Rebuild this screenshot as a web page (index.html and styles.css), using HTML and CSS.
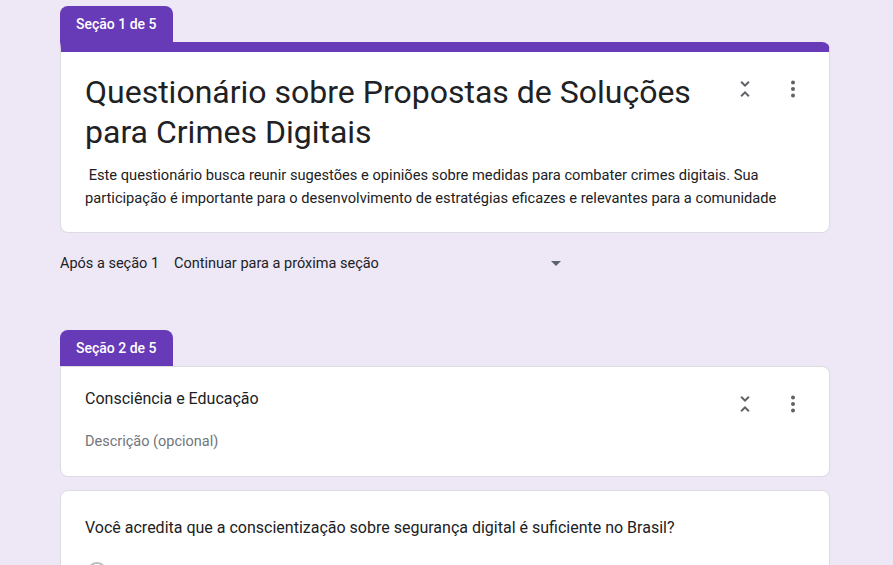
FILE: index.html
```html
<!DOCTYPE html>
<html lang="pt">
<head>
<meta charset="utf-8">
<link rel="stylesheet" href="styles.css">
</head>
<body>
<main class="form">
  <section class="section first">
    <div class="tab">Seção 1 de 5</div>
    <div class="card header-card">
      <div class="card-head">
        <h1 class="title">Questionário sobre Propostas de Soluções para Crimes Digitais</h1>
        <div class="actions">
          <svg class="icon" viewBox="0 0 24 24"><path d="M7.41 18.59L8.83 20 12 16.83 15.17 20l1.41-1.41L12 14l-4.59 4.59zm9.18-13.180L15.17 4 12 7.17 8.83 4 7.41 5.41 12 10l4.59-4.59z"/></svg>
          <svg class="icon" viewBox="0 0 24 24"><circle cx="12" cy="5.5" r="2"/><circle cx="12" cy="12" r="2"/><circle cx="12" cy="18.5" r="2"/></svg>
        </div>
      </div>
      <p class="desc">&nbsp;Este questionário busca reunir sugestões e opiniões sobre medidas para combater crimes digitais. Sua participação é importante para o desenvolvimento de estratégias eficazes e relevantes para a comunidade</p>
    </div>
    <div class="after">
      <span class="after-label">Após a seção 1</span>
      <span class="select">Continuar para a próxima seção<span class="caret"></span></span>
    </div>
  </section>

  <section class="section second">
    <div class="tab">Seção 2 de 5</div>
    <div class="card sec-card">
      <div class="card-head">
        <div class="sec-title">Consciência e Educação</div>
        <div class="actions small">
          <svg class="icon" viewBox="0 0 24 24"><path d="M7.41 18.59L8.83 20 12 16.83 15.17 20l1.41-1.41L12 14l-4.59 4.59zm9.18-13.18L15.17 4 12 7.17 8.83 4 7.41 5.41 12 10l4.59-4.59z"/></svg>
          <svg class="icon" viewBox="0 0 24 24"><circle cx="12" cy="5.5" r="2"/><circle cx="12" cy="12" r="2"/><circle cx="12" cy="18.5" r="2"/></svg>
        </div>
      </div>
      <div class="sec-desc">Descrição (opcional)</div>
    </div>
    <div class="card q-card">
      <div class="question">Você acredita que a conscientização sobre segurança digital é suficiente no Brasil?</div>
      <div class="option"><span class="radio"></span></div>
    </div>
  </section>
</main>
</body>
</html>
```
FILE: styles.css
```css
* { box-sizing: border-box; }
html, body { margin: 0; padding: 0; }
body {
  background: #ede7f6;
  font-family: Roboto, "Noto Sans", Arial, sans-serif;
  color: #202124;
  height: 565px;
  overflow: hidden;
}
.form {
  width: 770px;
  margin-left: 60px;
  padding-top: 6px;
}
.tab {
  display: inline-block;
  background: #673ab7;
  color: #fff;
  font-size: 14px;
  font-weight: 500;
  line-height: 36px;
  height: 36px;
  padding: 0 16px;
  border-radius: 8px 8px 0 0;
}
.section { display: flex; flex-direction: column; align-items: flex-start; }
.card {
  width: 770px;
  background: #fff;
  border: 1px solid #dadce0;
  border-radius: 8px;
}
.header-card {
  border-top: 10px solid #673ab7;
  border-radius: 0 8px 8px 8px;
  padding: 20px 24px 24px 24px;
  height: 191px;
}
.card-head {
  display: flex;
  justify-content: space-between;
  align-items: flex-start;
}
.title {
  margin: 0;
  font-size: 32px;
  font-weight: 400;
  line-height: 40px;
  width: 640px;
  color: #202124;
}
.actions {
  display: flex;
  gap: 24px;
  margin-top: 5px;
}
.icon { width: 24px; height: 24px; fill: #5f6368; display: block; }
.desc {
  margin: 12px 0 0 0;
  font-size: 14.67px;
  line-height: 23px;
  width: 720px;
}
.after {
  display: flex;
  align-items: center;
  height: 60px;
  font-size: 14.5px;
  color: #202124;
}
.after-label { width: 114px; }
.select {
  display: flex;
  align-items: center;
  justify-content: space-between;
  width: 387px;
}
.caret {
  width: 0; height: 0;
  border-left: 5px solid transparent;
  border-right: 5px solid transparent;
  border-top: 5px solid #5f6368;
}
.second { margin-top: 37px; }
.sec-card {
  border-radius: 0 8px 8px 8px;
  padding: 20px 24px 24px 24px;
  height: 111px;
}
.sec-title { font-size: 16px; line-height: 24px; }
.actions.small { margin-top: 5px; }
.sec-desc {
  margin-top: 16px;
  font-size: 14.5px;
  color: #70757a;
  line-height: 20px;
}
.q-card {
  margin-top: 13px;
  padding: 25px 24px 0 24px;
  height: 120px;
}
.question { font-size: 16px; line-height: 24px; }
.option { margin-top: 22px; padding-left: 2px; }
.radio {
  display: block;
  width: 20px; height: 20px;
  border: 2px solid #bdbdbd;
  border-radius: 50%;
}
```
